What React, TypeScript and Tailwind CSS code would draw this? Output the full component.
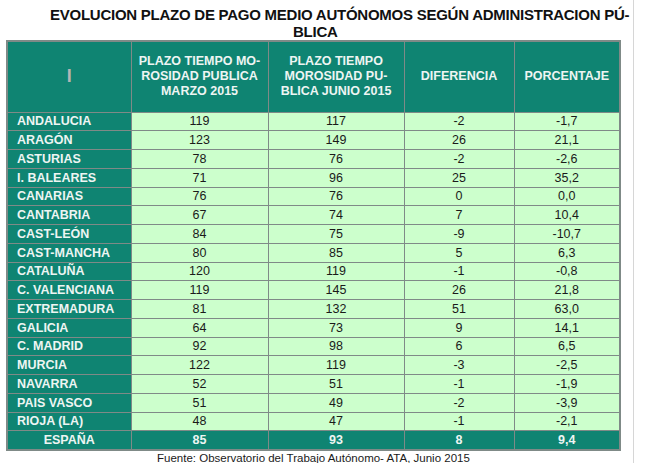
import React from "react";

const rows: [string, string, string, string, string][] = [
  ["ANDALUCIA", "119", "117", "-2", "-1,7"],
  ["ARAGÓN", "123", "149", "26", "21,1"],
  ["ASTURIAS", "78", "76", "-2", "-2,6"],
  ["I. BALEARES", "71", "96", "25", "35,2"],
  ["CANARIAS", "76", "76", "0", "0,0"],
  ["CANTABRIA", "67", "74", "7", "10,4"],
  ["CAST-LEÓN", "84", "75", "-9", "-10,7"],
  ["CAST-MANCHA", "80", "85", "5", "6,3"],
  ["CATALUÑA", "120", "119", "-1", "-0,8"],
  ["C. VALENCIANA", "119", "145", "26", "21,8"],
  ["EXTREMADURA", "81", "132", "51", "63,0"],
  ["GALICIA", "64", "73", "9", "14,1"],
  ["C. MADRID", "92", "98", "6", "6,5"],
  ["MURCIA", "122", "119", "-3", "-2,5"],
  ["NAVARRA", "52", "51", "-1", "-1,9"],
  ["PAIS VASCO", "51", "49", "-2", "-3,9"],
  ["RIOJA (LA)", "48", "47", "-1", "-2,1"],
];

export default function App() {
  return (
    <div
      className="relative w-[650px] h-[463px] bg-white overflow-hidden text-[#111]"
      style={{ fontFamily: '"Liberation Sans", Arial, sans-serif' }}
    >
      <div className="absolute left-[633px] top-0 h-full w-px bg-[#d6d6d6]" />
      <div className="flex flex-col">
        <div className="h-[40px] pt-[6px] text-[15px] font-bold leading-[17px] tracking-[-0.25px]">
          <div className="pl-[50px] whitespace-nowrap">
            EVOLUCION PLAZO DE PAGO MEDIO AUTÓNOMOS SEGÚN ADMINISTRACION PÚ-
          </div>
          <div className="pl-[293px]">BLICA</div>
        </div>
        <div className="pl-[6px]">
          <table className="table-fixed w-[613px] border-collapse border-2 border-[#7f8a87] text-[12.5px]">
            <colgroup>
              <col className="w-[124px]" />
              <col className="w-[137px]" />
              <col className="w-[136px]" />
              <col className="w-[110px]" />
              <col className="w-[106px]" />
            </colgroup>
            <thead>
              <tr className="h-[71px] bg-[#0f8472] text-[#eef5f3] font-bold">
                <th className="border border-[#7f8a87] text-center">
                  <span className="text-[#b5b5b5] text-[18px]">I</span>
                </th>
                <th className="border border-[#7f8a87] leading-[15px] font-bold px-0">
                  PLAZO TIEMPO MO-
                  <br />
                  ROSIDAD PUBLICA
                  <br />
                  MARZO 2015
                </th>
                <th className="border border-[#7f8a87] leading-[15px] font-bold px-0">
                  PLAZO TIEMPO
                  <br />
                  MOROSIDAD PU-
                  <br />
                  BLICA JUNIO 2015
                </th>
                <th className="border border-[#7f8a87] font-bold">DIFERENCIA</th>
                <th className="border border-[#7f8a87] font-bold">PORCENTAJE</th>
              </tr>
            </thead>
            <tbody>
              {rows.map((r) => (
                <tr key={r[0]} className="h-[18.75px] leading-[14px]">
                  <td className="border border-[#7f8a87] bg-[#0f8472] text-[#eef5f3] font-bold pl-[9px] py-0 whitespace-nowrap">
                    {r[0]}
                  </td>
                  {r.slice(1).map((v, i) => (
                    <td
                      key={i}
                      className="border border-[#7f8a87] bg-[#ccffcc] text-[#1a1a1a] text-center py-0"
                    >
                      {v}
                    </td>
                  ))}
                </tr>
              ))}
              <tr className="h-[18.75px] leading-[14px] bg-[#0f8472] text-[#eef5f3] font-bold">
                <td className="border border-[#7f8a87] text-center py-0">ESPAÑA</td>
                <td className="border border-[#7f8a87] text-center py-0">85</td>
                <td className="border border-[#7f8a87] text-center py-0">93</td>
                <td className="border border-[#7f8a87] text-center py-0">8</td>
                <td className="border border-[#7f8a87] text-center py-0">9,4</td>
              </tr>
            </tbody>
          </table>
        </div>
        <div className="pl-[157px] text-[11.5px] leading-[14px] text-[#1a1a1a]">
          Fuente: Observatorio del Trabajo Autónomo- ATA, Junio 2015
        </div>
      </div>
    </div>
  );
}
